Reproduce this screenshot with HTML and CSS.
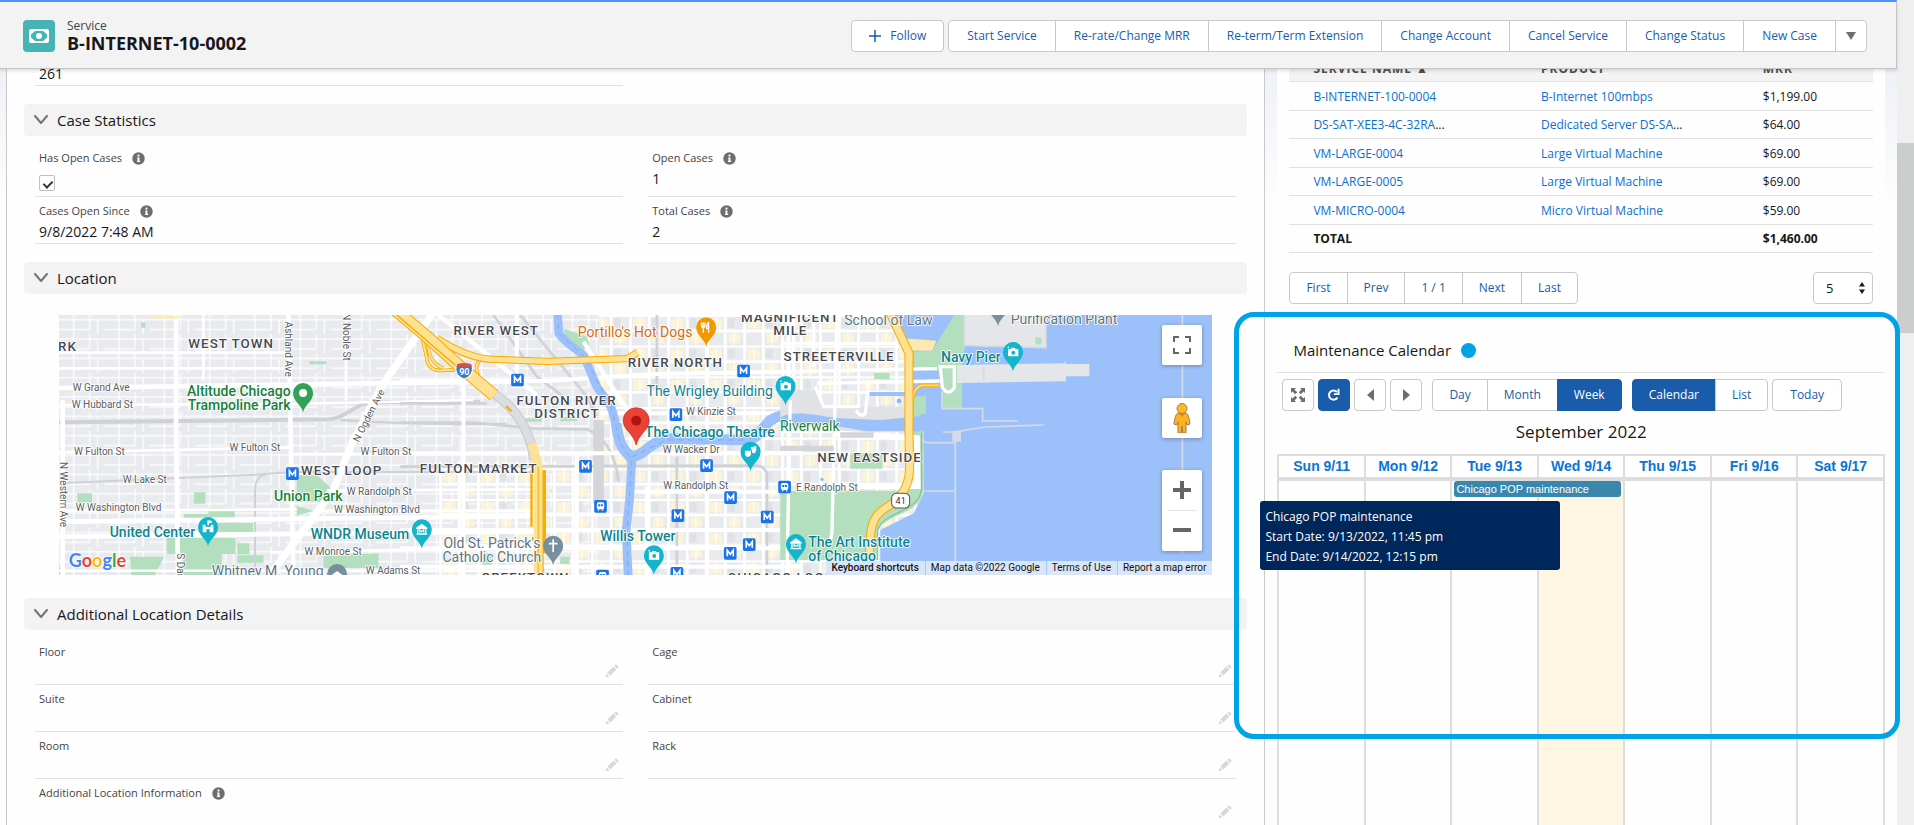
FILE: index.html
```html
<!DOCTYPE html>
<html lang="en">
<head>
<meta charset="utf-8">
<title>B-INTERNET-10-0002 | Service</title>
<link rel="stylesheet" href="styles.css">
</head>
<body>
<svg class="defs" aria-hidden="true">
  <symbol id="chevron" viewBox="0 0 14 10"><path d="M1 1l6 7 6-7" fill="none" stroke="#747474" stroke-width="2" stroke-linecap="round" stroke-linejoin="round"/></symbol>
  <symbol id="info" viewBox="0 0 14 14"><circle cx="7" cy="7" r="6.7" fill="#706e6b"/><circle cx="7" cy="3.800" r="1.200" fill="#fff"/><path d="M5.500 5.800H8V9.500H8.800V10.800H5.300V9.500H6V7H5.500z" fill="#fff"/></symbol>
  <symbol id="pencil" viewBox="0 0 14 14"><path d="M2.4 8.6l6-6 3 3-6 6zM9.3 1.8l1-1q.7-.6 1.400 0l1.600 1.600q.6.7 0 1.400l-1 1zM1.800 9.500l2.700 2.700-3.600 1q-.5 0-.3-.5z" fill="#d8d8d8"/></symbol>
</svg>
<div class="page">
  <div class="app">
    <header class="header">
      <span class="entity">
        <svg viewBox="0 0 32 32" width="32" height="32"><rect x="7" y="10" width="18" height="12" rx="1" fill="none" stroke="#fff" stroke-width="2"/><path d="M8 11h4l-4 3.500zM24 11h-4l4 3.500zM8 21h4l-4-3.500zM24 21h-4l4-3.500z" fill="#fff"/><circle cx="16" cy="16" r="3" fill="#fff"/></svg>
      </span>
      <div class="heading">
        <p class="kind">Service</p>
        <h1>B-INTERNET-10-0002</h1>
      </div>
      <button class="btn follow"><svg viewBox="0 0 12 12" width="12" height="12"><path d="M6 0v12M0 6h12" stroke="#185cab" stroke-width="1.5"/></svg>Follow</button>
      <div class="group actions">
        <button>Start Service</button><button>Re-rate/Change MRR</button><button>Re-term/Term Extension</button><button>Change Account</button><button>Cancel Service</button><button>Change Status</button><button>New Case</button><button class="more" aria-label="More actions"><svg viewBox="0 0 10 8" width="10" height="8"><path d="M0 0h10l-5 8z" fill="#706e6b"/></svg></button>
      </div>
    </header>

    <main class="content">
      <section class="detail">
        <div class="fields first">
          <div class="field"><div class="value">261</div></div>
        </div>

        <h2 class="bar"><svg class="chev"><use href="#chevron"/></svg>Case Statistics</h2>
        <div class="fields">
          <div class="field"><label class="label" for="open">Has Open Cases <svg class="info"><use href="#info"/></svg></label><div class="value tick"><input id="open" type="checkbox" checked></div></div>
          <div class="field"><div class="label">Open Cases <svg class="info"><use href="#info"/></svg></div><div class="value">1</div></div>
          <div class="field"><div class="label">Cases Open Since <svg class="info"><use href="#info"/></svg></div><div class="value">9/8/2022 7:48 AM</div></div>
          <div class="field"><div class="label">Total Cases <svg class="info"><use href="#info"/></svg></div><div class="value">2</div></div>
        </div>

        <h2 class="bar"><svg class="chev"><use href="#chevron"/></svg>Location</h2>
        <div class="map">
          <svg class="tiles" viewBox="0 0 3459 780" preserveAspectRatio="xMidYMid slice">
            <defs>
              <pattern id="west" width="136" height="58" patternUnits="userSpaceOnUse"><path d="M0 14H136M0 44H92M44 0V58M92 0V44M116 14V58" stroke="#fff" stroke-width="3.5" fill="none"/></pattern>
              <pattern id="east" width="114" height="92" patternUnits="userSpaceOnUse"><rect x="12" y="10" width="38" height="30" fill="#fcf4d8"/><rect x="70" y="56" width="34" height="28" fill="#fcf4d8"/><rect x="68" y="10" width="20" height="28" fill="#dfe1e5"/><path d="M0 2H114M0 48H114M4 0V92M60 0V92" stroke="#fff" stroke-width="8" fill="none"/><path d="M32 0V48M86 48V92" stroke="#fff" stroke-width="3"/></pattern>
              <g id="metro"><rect x="-19" y="-19" width="38" height="38" rx="5" fill="#1a73e8"/><path d="M-9 9V-9L0 3L9-9V9" fill="none" stroke="#fff" stroke-width="5"/></g>
              <g id="train"><rect x="-19" y="-19" width="38" height="38" rx="5" fill="#1a73e8"/><rect x="-11" y="-12" width="22" height="21" rx="5" fill="#fff"/><path d="M-7-6H-1V0H-7ZM1-6H7V0H1Z" fill="#1a73e8"/><path d="M-8 13l4-4M8 13l-4-4" stroke="#fff" stroke-width="3"/></g>
              <g id="drop"><path d="M0 58C-5 34-30 26-30 0A30 30 0 0 1 30 0C30 26 5 34 0 58Z"/></g>
              <g id="camera"><use href="#drop" fill="#12b5cb"/><path d="M-15-9H-7L-4-13H5L8-9H16V13H-15Z" fill="#fff"/><circle cx="1" cy="2" r="6" fill="#12b5cb"/><path d="M-17-14h6M-14-17v6" stroke="#fff" stroke-width="2"/></g>
              <g id="museum"><use href="#drop" fill="#12b5cb"/><path d="M-17-5L0-17L17-5V-1H-17ZM-14 0H-10V14H-14ZM10 0H14V14H10ZM-16 12H16V16H-16Z" fill="#fff"/><path d="M-6 10V1L0 7L6 1V10" fill="none" stroke="#fff" stroke-width="3"/></g>
            </defs>
            <rect width="3459" height="780" fill="#e8eaed"/>
            <rect width="1620" height="780" fill="url(#west)"/>
            <rect x="1620" width="1020" height="780" fill="url(#east)"/>
            <rect x="1140" y="440" width="480" height="340" fill="url(#east)"/>

            <g transform="translate(-57 -45)">
              <g fill="#b4dfbf"><path d="M303 68h13v15h-13zM808 184h50v9h-50zM112 580h44v28h-44zM462 577h34v34h-34zM505 625h79v28h-79zM432 642h72v12h-72zM505 668h134v28H505zM380 714h206v48H380zM430 760h115v65H430zM270 770h102l-28 55h-70zM592 730h36v33h-36zM592 766h78v22h-78zM770 525h60l45 42-25 38h-80zM770 618l50 14-50 15zM850 768l165-8v44H850zM57 800h12v25H57z"/></g>
              <g fill="none" stroke="#cfd1d5"><path d="M57 367L870 358C930 350 940 308 1010 306H1320" stroke-width="12"/><path d="M900 360C990 362 1000 374 1400 372" stroke-width="7"/><path d="M57 550L640 524L760 516H1500M645 825V570Q645 526 680 524" stroke-width="6"/></g>
              <g fill="none" stroke="#fff"><path d="M57 264L1420 244M57 710L1480 694M57 665L1480 648M68 300V825M408 45V370L414 825M745 45L760 825" stroke-width="14"/><path d="M57 315L740 312L1300 300M57 457L760 442M760 462H1200M57 632L770 628M820 632H1500M860 572L1500 568M690 757L1500 742M57 812H800M920 812H1500M490 45V240M918 45V300M57 158H740M57 205H740" stroke-width="8"/><path d="M1185 30L1030 250L935 430L880 570L690 825" stroke-width="22"/></g>
              <path d="M320 48h100l-5 8h-65z" fill="#fcedb8"/>
            </g>

            <g transform="translate(1023 -45)">
              <path d="M360 45L470 180L560 290L590 350" fill="none" stroke="#d3d5d9" stroke-width="9"/>
              <path d="M280 45L410 230L490 290M0 368H220L400 385L560 388Q640 420 655 545M0 310H260M0 500L1070 497Q1100 500 1100 530V825M830 470V825M770 45V270" fill="none" stroke="#cfd1d5" stroke-width="8"/>
              <path d="M595 360V610" stroke="#d3d5d9" stroke-width="32"/>
              <path d="M490 85L560 110L568 135L540 160L500 130ZM480 350h50v14h-50zM365 355h60v10h-60zM480 770h28v22h-28zM245 760h30v35h-30z" fill="#b4dfbf"/>
              <path d="M115 45L410 285M550 125L660 300L760 430" stroke="#fff" stroke-width="13" fill="none"/>
              <path d="M0 242L440 243L760 222L1200 215M190 245V825M350 45V240M530 460V825M740 560V825M920 45V825M1165 45V825M0 460H660M780 460H1200M0 690H1200M0 745H1200M0 800H1200M600 340H1200M700 575H1200" stroke="#fff" stroke-width="12" fill="none"/>
              <path d="M472 40L476 100C500 135 530 145 552 170L590 260L632 320C650 370 650 430 695 482L688 600L678 690L684 830" fill="none" stroke="#9cc0f9" stroke-width="26"/>
              <path d="M648 370C655 430 670 460 700 470C740 460 750 425 800 416L1040 420C1085 418 1090 352 1145 348H1230" fill="none" stroke="#9cc0f9" stroke-width="32"/>
              <path d="M472 40L476 100L552 170L632 320L660 430L695 482L680 690L684 830M695 470L800 420H1040" fill="none" stroke="#6f9eea" stroke-width="2" stroke-dasharray="16 14"/>
              <path d="M70 90C60 130 80 150 80 180C90 215 110 215 170 208M85 110C80 150 90 190 130 205M240 180C220 200 232 220 240 242" fill="none" stroke="#f9ab00" stroke-width="11"/>
              <path d="M70 90C60 130 80 150 80 180C90 215 110 215 170 208M85 110C80 150 90 190 130 205M240 180C220 200 232 220 240 242" fill="none" stroke="#fde293" stroke-width="6"/>
              <path d="M110 115C180 160 230 178 280 178L440 184L680 176L712 158" fill="none" stroke="#f9ab00" stroke-width="22"/>
              <path d="M110 115C180 160 230 178 280 178L440 184L680 176L712 158" fill="none" stroke="#fde293" stroke-width="16"/>
              <path d="M280 280Q385 350 402 480" fill="none" stroke="#c9cbd0" stroke-width="30"/>
              <path d="M280 280Q385 350 402 480" fill="none" stroke="#dcdde0" stroke-width="23"/>
              <path d="M-20 25L80 110L180 200L282 286" fill="none" stroke="#f9ab00" stroke-width="38"/>
              <path d="M-20 25L80 110L180 200L282 286" fill="none" stroke="#fde293" stroke-width="32"/>
              <path d="M-10 45L180 208" fill="none" stroke="#f9ab00" stroke-width="4"/>
              <path d="M318 318L334 334M394 430L412 500V825M427 510V825M394 510V680M434 510V760" fill="none" stroke="#f9ab00" stroke-width="7"/>
              <path d="M396 430L414 500V825" fill="none" stroke="#fde293" stroke-width="26"/>
              <path d="M414 500V825" stroke="#f9ab00" stroke-width="3"/>
            </g>

            <g transform="translate(2163 -45)">
              <path d="M0 270H110L130 320H390V395H0Z" fill="#e0e2e6"/>
              <path d="M0 352C50 330 90 345 180 355L300 360L390 352V392L260 394L150 375L70 370L0 385Z" fill="#9cc0f9"/>
              <path d="M268 276h106v12H268z" fill="#9cc0f9"/>
              <path d="M345 45H1296V825H300L300 690L400 640L430 580V395H395V150Z" fill="#9cc0f9"/>
              <path d="M370 115L468 122L456 152H392Z" fill="#fce9ad"/>
              <path d="M522 45H554V140L545 200V325H485V215L400 202V155L456 152ZM400 290L437 288V340L400 352ZM282 218h46v20h-46zM210 460h96v46h-96zM397 395L430 397V560C430 650 300 640 292 700V780H0V572H350L405 560Z" fill="#b4dfbf"/>
              <path d="M552 45H797V143L600 138H552ZM530 195L855 190V184H857V192H927V229H857V244L530 249Z" fill="#e4e6e9"/>
              <path d="M765 112h18v22h-18z" fill="#b4dfbf"/>
              <path d="M552 45V136L600 138L797 143V45M855 184V192M610 200V244M485 275V326H607V363H713M525 825V395L615 381L790 375M487 396H542M408 415L440 428H525M432 573H524M1206 45V760" fill="none" stroke="#d6dae3" stroke-width="5"/>
              <path d="M516 393h26v32h-26z" fill="#d6dae3"/>
              <path d="M480 200H522V262Q505 290 486 262ZM0 215L470 206M110 250L478 243M170 45L165 270L155 700L148 730M105 260L130 320H240M265 250L255 340Q240 355 228 330M40 50V260M100 50V200M0 130H350M30 300L20 825" fill="none" stroke="#fff" stroke-width="10"/>
              <path d="M160 400L410 415L412 558H240M0 390H160" fill="none" stroke="#fff" stroke-width="18"/>
              <path d="M0 445H160M180 405H280" stroke="#d3d5d9" stroke-width="16"/>
              <path d="M475 256H425Q398 262 396 310" fill="none" stroke="#f9ab00" stroke-width="10"/>
              <path d="M475 256H425Q398 262 396 310" fill="none" stroke="#fde293" stroke-width="5"/>
              <path d="M325 30L386 160V400L388 500Q388 575 330 615C285 640 268 660 268 760" fill="none" stroke="#f9ab00" stroke-width="27"/>
              <path d="M325 30L386 160V400L388 500Q388 575 330 615C285 640 268 660 268 760" fill="none" stroke="#fde293" stroke-width="21"/>
              <path d="M424 397V560C424 640 310 630 292 690V780" fill="none" stroke="#7fbf8f" stroke-width="3"/>
              <circle cx="356" cy="303" r="7" fill="#8db7f7"/><circle cx="125" cy="538" r="5" fill="#8db7f7"/>
            </g>

            <g transform="translate(-57 -45)">
              <g class="district"><text x="445" y="143">WEST TOWN</text><text x="54" y="152">RK</text><text x="783" y="526">WEST LOOP</text></g>
              <g class="street"><text x="98" y="274">W Grand Ave</text><text x="95" y="325">W Hubbard St</text><text x="102" y="465">W Fulton St</text><text x="568" y="454">W Fulton St</text><text x="961" y="465">W Fulton St</text><text x="248" y="549">W Lake St</text><text x="107" y="632">W Washington Blvd</text><text x="920" y="584">W Randolph St</text><text x="882" y="638">W Washington Blvd</text><text x="793" y="766">W Monroe St</text><text x="977" y="822">W Adams St</text>
                <text transform="translate(734 65) rotate(90)">Ashland Ave</text><text transform="translate(908 40) rotate(90)">N Noble St</text><text transform="translate(60 486) rotate(90)">N Western Ave</text><text transform="translate(410 760) rotate(90)">S Damen</text><text transform="translate(956 428) rotate(-63)">N Ogden Ave</text></g>
              <g class="poi green"><text x="441" y="287">Altitude Chicago</text><text x="443" y="329">Trampoline Park</text><text x="702" y="604">Union Park</text></g>
              <g class="poi teal"><text x="209" y="710">United Center</text><text x="812" y="718">WNDR Museum</text></g>
              <g class="poi slate"><text x="515" y="829">Whitney M. Young</text></g>
              <use href="#drop" x="789" y="279" fill="#34a056"/><circle cx="789" cy="279" r="12" fill="#fff"/>
              <use href="#drop" x="504" y="681" fill="#12b5cb"/><path d="M488 674h8v6h16v-6h8v23h-11v-9h-10v9h-11zM502 661v14h5v-6h8v-7z" fill="#fff"/>
              <use href="#museum" x="1145" y="688"/><use href="#metro" x="757" y="521"/>
              <circle cx="891" cy="822" r="30" fill="#78909c"/><path d="M875 825l16-12 16 12z" fill="#fff"/>
              <text class="google" x="86" y="801"><tspan fill="#4285f4">G</tspan><tspan fill="#ea4335">o</tspan><tspan fill="#fbbc05">o</tspan><tspan fill="#4285f4">g</tspan><tspan fill="#34a853">l</tspan><tspan fill="#ea4335">e</tspan></text>
            </g>
            <g transform="translate(1023 -45)">
              <g class="district"><text x="160" y="104">RIVER WEST</text><text x="683" y="200">RIVER NORTH</text><text x="349" y="315">FULTON RIVER</text><text x="402" y="354">DISTRICT</text><text x="59" y="518">FULTON MARKET</text><text x="1022" y="66">MAGNIFICENT</text><text x="1119" y="106">MILE</text><text x="1150" y="184">STREETERVILLE</text><text x="243" y="846">GREEKTOWN</text><text x="982" y="845">CHICAGO LOOP</text></g>
              <g class="street"><text x="857" y="345">W Kinzie St</text><text x="788" y="458">W Wacker Dr</text><text x="789" y="567">W Randolph St</text><text x="1187" y="574">E Randolph St</text></g>
              <g class="poi orange"><text x="533" y="111">Portillo's Hot Dogs</text></g>
              <g class="poi teal"><text class="plain" x="739" y="287">The Wrigley Building</text><text x="734" y="411">The Chicago Theatre</text><text x="600" y="722">Willis Tower</text></g>
              <g class="poi slate"><text x="130" y="745">Old St. Patrick's</text><text x="127" y="786">Catholic Church</text></g>
              <g class="poi green"><text class="plain" x="1139" y="393">Riverwalk</text></g>
              <use href="#metro" x="352" y="240"/><use href="#metro" x="1030" y="213"/><use href="#metro" x="827" y="344"/><use href="#metro" x="556" y="499"/><use href="#metro" x="919" y="497"/><use href="#metro" x="991" y="593"/><use href="#metro" x="833" y="647"/><use href="#metro" x="1101" y="651"/><use href="#metro" x="1047" y="734"/><use href="#metro" x="990" y="760"/><use href="#metro" x="830" y="820"/>
              <use href="#train" x="601" y="619"/><use href="#train" x="1153" y="561"/><use href="#train" x="607" y="828"/>
              <use href="#drop" x="918" y="82" fill="#f29900"/><path d="M904 68v10q0 5 5 5t5-5V68M909 68v30M925 98V68q-6 4-6 17h6" fill="none" stroke="#fff" stroke-width="4"/>
              <use href="#camera" x="1156" y="258"/><use href="#camera" x="761" y="766"/><use href="#museum" x="1187" y="732"/>
              <use href="#drop" x="1051" y="455" fill="#12b5cb"/><path d="M1034 452h18v12q-9 14-18 0zM1052 442l16-4v14q-5 12-12 6z" fill="#fff"/>
              <use href="#drop" x="459" y="737" fill="#78909c"/><path d="M459 718v38M446 731h26" stroke="#fff" stroke-width="5"/>
              <path d="M168 196q24-10 48 0c4 20-4 34-24 41c-20-7-28-21-24-41z" fill="#3a78c9" stroke="#fff" stroke-width="3"/><path d="M170 193q22-8 44 0v7h-44z" fill="#d8504a"/><text class="shield" x="177" y="226">90</text>
              <path d="M708 435C700 400 669 390 669 362A39 39 0 0 1 747 362C747 390 716 400 708 435Z" fill="#ea4335" stroke="#c5221f" stroke-width="2"/><circle cx="708" cy="362" r="15" fill="#b31412"/>
            </g>
            <g transform="translate(2163 -45)">
              <g class="district"><text x="111" y="487">NEW EASTSIDE</text></g>
              <g class="poi teal"><text x="482" y="186">Navy Pier</text><text x="84" y="740">The Art Institute</text><text x="84" y="782">of Chicago</text></g>
              <g class="poi slate"><text x="192" y="74">School of Law</text><text x="691" y="71">Purification Plant</text></g>
              <use href="#camera" x="698" y="156"/>
              <use href="#drop" x="653" y="20" fill="#78909c"/>
              <rect x="334" y="580" width="54" height="44" rx="14" fill="#fff" stroke="#555" stroke-width="3"/><text class="route" x="346" y="612">41</text>
            </g>
          </svg>
          <button class="ctl full" aria-label="Toggle fullscreen view"><svg viewBox="0 0 18 18" width="18" height="18"><path d="M1 6V1h5M12 1h5v5M17 12v5h-5M6 17H1v-5" fill="none" stroke="#666" stroke-width="2"/></svg></button>
          <button class="ctl peg" aria-label="Street View Pegman"><svg viewBox="0 0 18 30" width="18" height="30"><path d="M5 10h8q3 1 4 11l-3 1-1-3v11H9.700l-.7-7-.7 7H5V19l-1 3-3-1Q2 11 5 10z" fill="#fbb31f" stroke="#a97b50"/><path d="M5 10l4 4 4-4z" fill="#e08a1e"/><circle cx="9" cy="5.500" r="5" fill="#fbb829" stroke="#a97b50"/></svg></button>
          <div class="zoom">
            <button aria-label="Zoom in"><svg viewBox="0 0 18 18" width="18" height="18"><path d="M9 0v18M0 9h18" stroke="#666" stroke-width="4"/></svg></button>
            <button aria-label="Zoom out"><svg viewBox="0 0 18 18" width="18" height="18"><path d="M0 9h18" stroke="#666" stroke-width="4"/></svg></button>
          </div>
          <div class="credits"><button>Keyboard shortcuts</button><span>Map data ©2022 Google</span><a href="#">Terms of Use</a><a href="#">Report a map error</a></div>
        </div>

        <h2 class="bar"><svg class="chev"><use href="#chevron"/></svg>Additional Location Details</h2>
        <div class="fields">
          <div class="field"><div class="label">Floor</div><div class="value"><button class="edit" aria-label="Edit Floor"><svg><use href="#pencil"/></svg></button></div></div>
          <div class="field"><div class="label">Cage</div><div class="value"><button class="edit" aria-label="Edit Cage"><svg><use href="#pencil"/></svg></button></div></div>
          <div class="field"><div class="label">Suite</div><div class="value"><button class="edit" aria-label="Edit Suite"><svg><use href="#pencil"/></svg></button></div></div>
          <div class="field"><div class="label">Cabinet</div><div class="value"><button class="edit" aria-label="Edit Cabinet"><svg><use href="#pencil"/></svg></button></div></div>
          <div class="field"><div class="label">Room</div><div class="value"><button class="edit" aria-label="Edit Room"><svg><use href="#pencil"/></svg></button></div></div>
          <div class="field"><div class="label">Rack</div><div class="value"><button class="edit" aria-label="Edit Rack"><svg><use href="#pencil"/></svg></button></div></div>
          <div class="field wide"><div class="label">Additional Location Information <svg class="info"><use href="#info"/></svg></div><div class="value"><button class="edit" aria-label="Edit Additional Location Information"><svg><use href="#pencil"/></svg></button></div></div>
        </div>
      </section>

      <aside class="side">
        <section class="services">
          <table class="list">
            <colgroup><col class="c1"><col class="c2"><col class="c3"></colgroup>
            <thead><tr><th>SERVICE NAME ▲</th><th>PRODUCT</th><th>MRR</th></tr></thead>
            <tbody>
              <tr><td><a href="#">B-INTERNET-100-0004</a></td><td><a href="#">B-Internet 100mbps</a></td><td>$1,199.00</td></tr>
              <tr><td><a href="#">DS-SAT-XEE3-4C-32RA</a>...</td><td><a href="#">Dedicated Server DS-SA</a>...</td><td>$64.00</td></tr>
              <tr><td><a href="#">VM-LARGE-0004</a></td><td><a href="#">Large Virtual Machine</a></td><td>$69.00</td></tr>
              <tr><td><a href="#">VM-LARGE-0005</a></td><td><a href="#">Large Virtual Machine</a></td><td>$69.00</td></tr>
              <tr><td><a href="#">VM-MICRO-0004</a></td><td><a href="#">Micro Virtual Machine</a></td><td>$59.00</td></tr>
              <tr class="total"><td>TOTAL</td><td></td><td>$1,460.00</td></tr>
            </tbody>
          </table>
          <div class="pager">
            <div class="group"><button>First</button><button>Prev</button><button>1 / 1</button><button>Next</button><button>Last</button></div>
            <div class="size"><select aria-label="Rows per page"><option>5</option></select><svg viewBox="0 0 8 16" width="6" height="16"><path d="M0 6l4-6 4 6zM0 10h8l-4 6z" fill="#181818"/></svg></div>
          </div>
        </section>

        <section class="calendar">
          <h2 class="caltitle">Maintenance Calendar <span class="dot"></span></h2>
          <div class="toolbar">
            <button class="ico" aria-label="Expand"><svg viewBox="0 0 14 14" width="14" height="14"><path d="M0 0h5L3.500 1.500l2.700 2.700-2 2L1.500 3.500 0 5zM14 0v5l-1.500-1.500-2.700 2.700-2-2 2.700-2.700L9 0zM0 14V9l1.500 1.500 2.700-2.700 2 2-2.700 2.700L5 14zM14 14H9l1.500-1.500-2.700-2.700 2-2 2.700 2.700L14 9z" fill="#706e6b"/></svg></button>
            <button class="ico on" aria-label="Refresh"><svg viewBox="0 0 14 14" width="14" height="14"><path d="M10.500 9.500A4.600 4.600 0 1 1 10 4" fill="none" stroke="#fff" stroke-width="2"/><path d="M12.500.8V7H6.800V5.200h3.800V.8z" fill="#fff"/></svg></button>
            <button class="ico" aria-label="Previous"><svg viewBox="0 0 7 12" width="7" height="12"><path d="M7 0v12L0 6z" fill="#706e6b"/></svg></button>
            <button class="ico" aria-label="Next"><svg viewBox="0 0 7 12" width="7" height="12"><path d="M0 0v12l7-6z" fill="#706e6b"/></svg></button>
            <div class="group span"><button>Day</button><button>Month</button><button class="on">Week</button></div>
            <div class="group mode"><button class="on">Calendar</button><button>List</button></div>
            <button class="btn today">Today</button>
          </div>
          <h3>September 2022</h3>
          <table class="week">
            <thead><tr><th>Sun 9/11</th><th>Mon 9/12</th><th>Tue 9/13</th><th>Wed 9/14</th><th>Thu 9/15</th><th>Fri 9/16</th><th>Sat 9/17</th></tr></thead>
            <tbody><tr><td></td><td></td><td><a class="event" href="#">Chicago POP maintenance</a></td><td class="now"></td><td></td><td></td><td></td></tr></tbody>
          </table>
          <div class="tip" role="tooltip">Chicago POP maintenance<br>Start Date: 9/13/2022, 11:45 pm<br>End Date: 9/14/2022, 12:15 pm</div>
          <div class="outline"></div>
        </section>
      </aside>
    </main>
  </div>
  <div class="scroll"><div class="thumb"></div></div>
</div>
</body>
</html>
```

FILE: styles.css
```css
* { box-sizing: border-box; }
body { margin: 0; font: 14px/20px "Open Sans", "Noto Sans", sans-serif; color: #181818; background: #fff; }
h1, h2, h3, p { margin: 0; font-weight: 400; }
a { color: #0b6fd0; text-decoration: none; }
button { font: inherit; font-size: 12px; color: #185cab; background: #fff; border: 1px solid #c9c9c9; padding: 0; display: inline-flex; align-items: center; justify-content: center; white-space: nowrap; }
.defs { position: absolute; width: 0; height: 0; }
.page { display: flex; height: 100vh; overflow: hidden; }
.app { position: relative; z-index: 1; flex: 1; min-width: 0; }

.scroll { width: 17px; background: #efefef; padding-top: 143px; }
.thumb { height: 190px; background: #cbcecd; }

.header { position: absolute; z-index: 2; top: 0; left: 0; right: 0; display: flex; align-items: center; height: 69px; padding: 2px 29px 0 23px; background: #f3f3f3; border-top: 2px solid #5292f7; border-bottom: 1px solid #c4c4c4; border-right: 1px solid #c4c4c4; box-shadow: 0 2px 3px rgba(0, 0, 0, .12); }
.entity { width: 32px; height: 32px; border-radius: 4px; background: #44b4b5; }
.entity svg { display: block; }
.heading { flex: 1; margin-left: 12px; padding-bottom: 2px; }
.kind { font-size: 12px; line-height: 16px; color: #444; }
h1 { font-size: 18px; line-height: 18px; font-weight: 700; }
.btn { height: 32px; border-radius: 4px; }
.follow { width: 93px; gap: 9px; margin-right: 4px; }
.group { display: flex; height: 32px; }
.group button { padding: 0 16px; margin-left: -1px; }
.group button:first-child { margin-left: 0; border-radius: 4px 0 0 4px; }
.group button:last-child { border-radius: 0 4px 4px 0; }
.actions button { padding: 0 18px; }
.group .more { width: 32px; padding: 0; }
.on, .group .on { background: #185cab; border-color: #185cab; color: #fff; }

.content { display: grid; grid-template-columns: minmax(0, 1fr) 33.4%; height: 100%; padding: 53px 0 0 6px; background: linear-gradient(#eef1f6 69px, #fdfdfe 200px); }
.detail { min-width: 0; height: calc(100vh - 53px); overflow: hidden; padding: 8px 17px 0; background: #fefefe; border: 1px solid #c9c9c9; border-width: 0 1px; }
.bar { display: flex; align-items: center; height: 32px; margin-top: 18px; padding-left: 10px; border-radius: 4px; background: #f3f3f3; font-size: 15px; gap: 9px; }
.chev { width: 14px; height: 10px; }
.fields { display: grid; grid-template-columns: 1fr 1fr; column-gap: 25px; margin: 8px 11px 0; }
.fields.first { margin-top: 0; }
.field { padding: 3px 4px 1px; border-bottom: 1px solid #e2e2e2; }
.label { display: flex; align-items: center; gap: 10px; height: 22px; font-size: 11px; color: #444; }
.info { width: 13px; height: 13px; }
.value { height: 20px; font-size: 14px; }
.value.tick { height: 26px; padding-top: 6px; }
input[type="checkbox"] { appearance: none; display: block; position: relative; width: 16px; height: 16px; margin: 0; border: 1px solid #c0c0c0; border-radius: 2px; background: #fff; }
input:checked::after { content: ""; position: absolute; left: 5px; top: 3px; width: 4px; height: 7px; border: solid #333; border-width: 0 2px 2px 0; transform: rotate(45deg); }
.wide { grid-column: 1 / -1; }
.edit { display: flex; margin-left: auto; padding-top: 1px; border: 0; background: none; }
.edit svg { width: 14px; height: 14px; }

.map { position: relative; height: 260px; margin: 21px 35px 23px; overflow: hidden; }
.tiles { display: block; width: 100%; height: 100%; font-family: Roboto, sans-serif; }
.tiles text { paint-order: stroke; stroke: #fff; stroke-width: 5px; stroke-linejoin: round; }
.district { font-size: 40px; font-weight: 500; fill: #46494d; letter-spacing: 3px; }
.street { font-size: 30px; fill: #5a5d61; }
.poi { font-size: 42px; font-weight: 500; }
.green { fill: #188038; }
.teal { fill: #0b8490; }
.slate { fill: #5c7480; font-weight: 400; }
.orange { fill: #d56e0c; font-weight: 400; }
.plain { font-weight: 400; }
.tiles .google { font-family: Lato, sans-serif; font-size: 54px; font-weight: 700; }
.tiles .shield { font-size: 27px; font-weight: 700; fill: #fff; stroke: none; }
.route { font-size: 27px; fill: #333; }
.ctl, .zoom { position: absolute; right: 10px; width: 40px; height: 40px; border: 0; border-radius: 2px; background: #fff; box-shadow: 0 1px 4px rgba(0, 0, 0, .3); }
.full { top: 10px; }
.peg { top: 83px; }
.zoom { top: 155px; height: 81px; }
.zoom button { width: 40px; height: 40px; border: 0; background: none; }
.zoom button + button { position: relative; }
.zoom button + button::before { content: ""; position: absolute; top: 0; left: 5px; right: 5px; border-top: 1px solid #e6e6e6; }
.credits { position: absolute; right: 0; bottom: 0; display: flex; height: 14px; font: 10px/14px Roboto, sans-serif; }
.credits > * { padding: 0 6px 0 5px; background: #dae6f8; color: #111; border: 0; border-right: 1px solid #aac6f5; font: inherit; }
.credits button { font-weight: 500; }
.credits > :last-child { border-right: 0; }

.side { min-width: 0; padding: 0 12px; }
.services { padding: 0 12px 19px; background: #fefefe; }
.list { width: 100%; table-layout: fixed; border-collapse: collapse; font-size: 12px; }
.c1 { width: 39%; }
.c2 { width: 38%; }
.list th, .list td { height: 28px; padding: 2px 0 0 24px; text-align: left; border-bottom: 1px solid #e2e2e2; line-height: 20px; white-space: nowrap; }
.list th { background: #f3f3f3; color: #514f4d; font-size: 12px; letter-spacing: 1px; padding-top: 4px; }
.list tbody tr:nth-child(odd) td { height: 29px; }
.total { font-weight: 700; }
.pager { display: flex; justify-content: space-between; margin-top: 19px; }
.size { position: relative; width: 60px; height: 32px; }
.size select { appearance: none; width: 100%; height: 100%; padding: 0 12px; border: 1px solid #c9c9c9; border-radius: 4px; background: #fff; font: inherit; font-size: 13px; color: inherit; }
.size svg { position: absolute; right: 8px; top: 8px; }

.calendar { position: relative; background: #fefefe; }
.caltitle { display: flex; align-items: center; gap: 10px; height: 50px; padding: 6px 16px 0; font-size: 15px; border-bottom: 1px solid #e2e2e2; }
.dot { width: 15px; height: 15px; border-radius: 50%; background: #00a2e8; }
.toolbar { display: flex; align-items: center; gap: 4px; padding: 6px 5px 4px; }
.ico { width: 32px; height: 32px; border-radius: 4px; }
.today { padding: 0 17px; }
.span { margin-left: 6px; }
.mode { margin-left: 6px; }
h3 { font-size: 17px; line-height: 24px; padding: 5px 0 10px; text-align: center; }
.week { width: 100%; table-layout: fixed; border-collapse: collapse; }
.week th { height: 24px; padding: 0; border: 2px solid #ddd; border-bottom-width: 4px; font: bold 14px/18px "Liberation Sans", sans-serif; color: #0b74d3; }
.week td { position: relative; height: 500px; padding: 0; vertical-align: top; border: 2px solid #ddd; }
.week .now { background: #fef6e2; }
.event { position: absolute; z-index: 1; left: 2px; top: 0; width: calc(200% - 2px); height: 16px; padding: 0 2px; border-radius: 3px; background: #3a87ad; color: #fff; font: 11px/16px "Liberation Sans", sans-serif; }
.tip { position: absolute; z-index: 3; left: -17px; top: 178px; width: 300px; padding: 6px 5px 3px; border-radius: 3px; background: #00275b; color: #fff; font-size: 12px; line-height: 20px; }
.outline { position: absolute; z-index: 2; left: -43px; right: -15px; top: -11px; height: 427px; border: 5px solid #00a2e8; border-radius: 20px; pointer-events: none; }
```
